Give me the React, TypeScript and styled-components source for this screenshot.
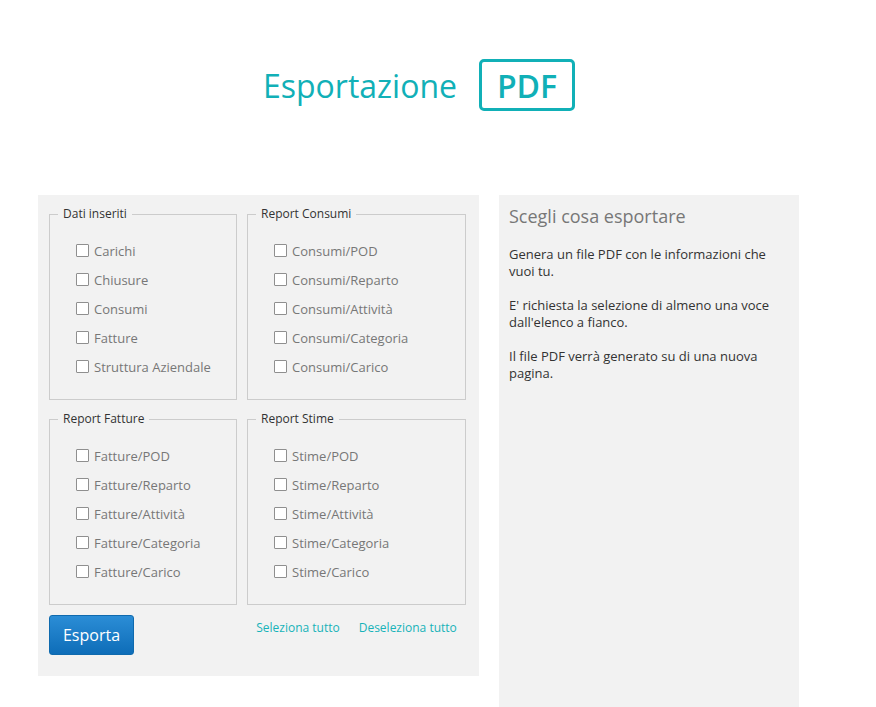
import React from "react";
import styled, { createGlobalStyle } from "styled-components";

const GlobalStyle = createGlobalStyle`
    body {
        margin: 0;
        background: #ffffff;
        font-family: 'Open Sans', 'Noto Sans', sans-serif;
    }
`;

const groups = [
    { title: "Dati inseriti", items: ["Carichi", "Chiusure", "Consumi", "Fatture", "Struttura Aziendale"] },
    { title: "Report Consumi", items: ["Consumi/POD", "Consumi/Reparto", "Consumi/Attività", "Consumi/Categoria", "Consumi/Carico"] },
    { title: "Report Fatture", items: ["Fatture/POD", "Fatture/Reparto", "Fatture/Attività", "Fatture/Categoria", "Fatture/Carico"] },
    { title: "Report Stime", items: ["Stime/POD", "Stime/Reparto", "Stime/Attività", "Stime/Categoria", "Stime/Carico"] },
];

const App = () => {
    return (
        <>
            <GlobalStyle />
            <Page>
                <Header>
                    <Title>Esportazione</Title>
                    <Badge>PDF</Badge>
                </Header>
                <Columns>
                    <FormPanel>
                        <Grid>
                            {groups.map((g) => (
                                <Group key={g.title}>
                                    <Legend>{g.title}</Legend>
                                    <List>
                                        {g.items.map((it) => (
                                            <Item key={it}>
                                                <Check type="checkbox" />
                                                <span>{it}</span>
                                            </Item>
                                        ))}
                                    </List>
                                </Group>
                            ))}
                            <ExportButton>Esporta</ExportButton>
                            <Links>
                                <LinkText href="#">Seleziona tutto</LinkText>
                                <LinkText href="#">Deseleziona tutto</LinkText>
                            </Links>
                        </Grid>
                    </FormPanel>
                    <InfoPanel>
                        <InfoTitle>Scegli cosa esportare</InfoTitle>
                        <Para>Genera un file PDF con le informazioni che vuoi tu.</Para>
                        <Para>E' richiesta la selezione di almeno una voce dall'elenco a fianco.</Para>
                        <Para>Il file PDF verrà generato su di una nuova pagina.</Para>
                    </InfoPanel>
                </Columns>
            </Page>
        </>
    );
};

export default App;

const Page = styled.div`
    width: 761px;
    margin-left: 38px;
    padding-top: 59px;
`;

const Header = styled.div`
    display: flex;
    justify-content: center;
    align-items: center;
    gap: 22px;
    height: 52px;
`;

const Title = styled.h1`
    margin: 0 0 0 1px;
    font-weight: 400;
    font-size: 32px;
    color: #11b0b7;
`;

const Badge = styled.div`
    box-sizing: border-box;
    height: 52px;
    width: 96px;
    border: 3px solid #11b0b7;
    border-radius: 5px;
    display: flex;
    align-items: center;
    justify-content: center;
    font-size: 32px;
    font-weight: 600;
    color: #11b0b7;
`;

const Columns = styled.div`
    display: flex;
    align-items: flex-start;
    gap: 20px;
    margin-top: 84px;
`;

const FormPanel = styled.div`
    box-sizing: border-box;
    width: 441px;
    background: #f2f2f2;
    padding: 11px 13px 21px 11px;
`;

const Grid = styled.div`
    display: grid;
    grid-template-columns: 188px 219px;
    column-gap: 10px;
    row-gap: 11px;
`;

const Group = styled.fieldset`
    margin: 0;
    padding: 0;
    min-width: 0;
    border: 1px solid #cccccc;
`;

const Legend = styled.legend`
    margin-left: 8px;
    padding: 0 5px;
    font-size: 12px;
    line-height: 16px;
    color: #333333;
`;

const List = styled.div`
    display: flex;
    flex-direction: column;
    padding: 14px 0 18px 26px;
`;

const Item = styled.label`
    display: flex;
    align-items: center;
    gap: 5px;
    height: 29px;
    font-size: 13px;
    color: #777777;
`;

const Check = styled.input`
    appearance: none;
    margin: 0;
    width: 13px;
    height: 13px;
    border: 1px solid #8f8f8f;
    border-radius: 1px;
    background: #ffffff;
    box-sizing: border-box;
`;

const ExportButton = styled.button`
    justify-self: start;
    margin-top: -1px;
    width: 85px;
    height: 40px;
    border: 1px solid #0f6aae;
    border-radius: 3px;
    background: linear-gradient(to bottom, #2b8dd6, #0e6db8);
    color: #ffffff;
    font-family: 'Open Sans', sans-serif;
    font-size: 16px;
    padding: 0;
`;

const Links = styled.div`
    display: flex;
    justify-content: center;
    gap: 19px;
    padding-top: 3px;
`;

const LinkText = styled.a`
    font-size: 12px;
    color: #17b3b9;
    text-decoration: none;
`;

const InfoPanel = styled.div`
    box-sizing: border-box;
    width: 300px;
    height: 530px;
    background: #f2f2f2;
    padding: 8px 10px;
`;

const InfoTitle = styled.h2`
    margin: 0 0 17px;
    font-weight: 400;
    font-size: 18px;
    line-height: 26px;
    color: #777777;
`;

const Para = styled.p`
    margin: 0 0 17px;
    font-size: 13px;
    line-height: 17px;
    color: #333333;
`;
